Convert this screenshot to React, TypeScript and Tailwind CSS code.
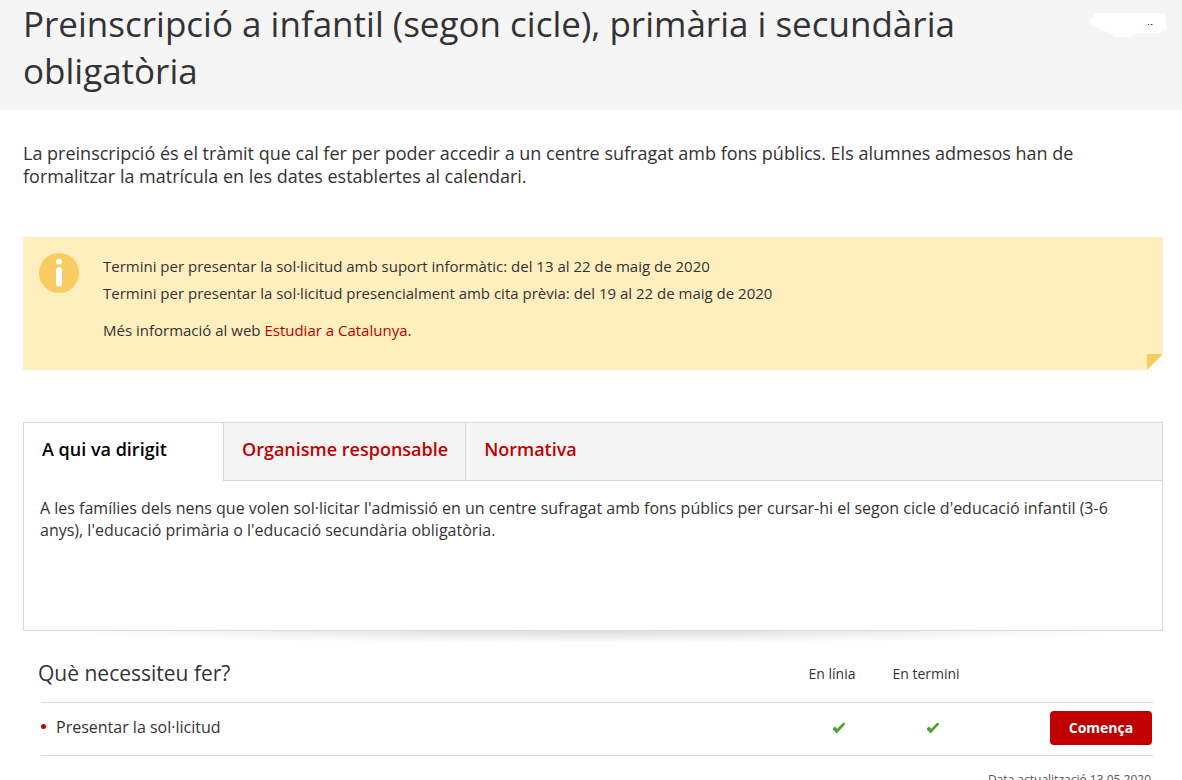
import { useState } from 'react';

interface Tab {
  id: string;
  label: string;
  content: string;
}

interface Step {
  name: string;
  online: boolean;
  open: boolean;
}

const tabs: Tab[] = [
  {
    id: 'dirigit',
    label: 'A qui va dirigit',
    content:
      "A les famílies dels nens que volen sol·licitar l'admissió en un centre sufragat amb fons públics per cursar-hi el segon cicle d'educació infantil (3-6 anys), l'educació primària o l'educació secundària obligatòria.",
  },
  { id: 'organisme', label: 'Organisme responsable', content: '' },
  { id: 'normativa', label: 'Normativa', content: '' },
];

const steps: Step[] = [{ name: 'Presentar la sol·licitud', online: true, open: true }];

function InfoIcon() {
  return (
    <svg className="h-10 w-10 shrink-0" viewBox="0 0 40 40" aria-hidden="true">
      <circle cx="20" cy="20" r="20" fill="#f9cb60" />
      <circle cx="20" cy="8.7" r="3" fill="#fff" />
      <rect x="17" y="14" width="6" height="19.5" rx="3" fill="#fff" />
    </svg>
  );
}

function CheckIcon({ label }: { label: string }) {
  return (
    <svg className="mx-auto h-3 w-3" viewBox="0 0 12 12" role="img" aria-label={label}>
      <path d="M0 6.2 L2 4.4 L4.2 6.8 L10.2 0.8 L12 1.2 L12 2.6 L4.2 11 L3.2 11 L0 7.8 Z" fill="#53a22c" />
    </svg>
  );
}

function Logo() {
  return (
    <svg className="mt-[13px] h-6 w-[76px] shrink-0" viewBox="0 0 76 24" aria-hidden="true">
      <path
        d="M3 0 H75 V9 H76 V18 H73 L71 20 H49 L44 21 L41 24 H23 V21 L17 19 L12 17 L10 15 L5 14 L3 13 H0 V5 H3 Z"
        fill="#fff"
      />
      <path d="M58 11 h1 v1 h-1 Z" fill="#c4007a" />
      <path d="M60 11 h1 v1 h-1 Z" fill="#f0c060" />
      <path d="M61 11 h1 v1 h-1 Z" fill="#c00000" />
      <path d="M62 11 h1 v1 h-1 Z" fill="#d8a0c8" />
    </svg>
  );
}

function Notice() {
  return (
    <div className="relative flex gap-6 bg-[#ffeebe] px-4 pt-4 pb-[26px] text-[15px]">
      <InfoIcon />
      <div className="leading-[27px]">
        <p>Termini per presentar la sol·licitud amb suport informàtic: del 13 al 22 de maig de 2020</p>
        <p>Termini per presentar la sol·licitud presencialment amb cita prèvia: del 19 al 22 de maig de 2020</p>
        <p className="mt-[10px]">
          Més informació al web{' '}
          <a href="#estudiar" className="text-[#c00000] hover:underline">
            Estudiar a Catalunya
          </a>
          .
        </p>
      </div>
      {/* Folded corner */}
      <svg className="absolute right-0 bottom-0 h-4 w-4" viewBox="0 0 16 16" aria-hidden="true">
        <path d="M0 16 L16 0 V16 Z" fill="#fff" />
        <path d="M0 0 H16 L0 16 Z" fill="#f9cb60" />
      </svg>
    </div>
  );
}

function Tabs() {
  const [active, setActive] = useState(tabs[0].id);
  const current = tabs.find((t) => t.id === active) ?? tabs[0];

  return (
    <div>
      <div className="border border-[#d9d9d9]">
        <div className="flex" role="tablist">
          {tabs.map((tab, i) => (
            <button
              key={tab.id}
              type="button"
              role="tab"
              id={`tab-${tab.id}`}
              aria-selected={tab.id === active}
              aria-controls="tab-panel"
              onClick={() => setActive(tab.id)}
              className={`h-[58px] border-b pr-[17px] pb-[6px] pl-[18px] text-left text-lg font-semibold ${
                i === 0 ? 'w-[199px]' : 'border-l border-l-[#d9d9d9]'
              } ${
                tab.id === active
                  ? 'border-b-white bg-white text-black'
                  : 'border-b-[#d9d9d9] bg-[#f5f5f5] text-[#c00000]'
              }`}
            >
              {tab.label}
            </button>
          ))}
          <div className="flex-1 border-b border-[#d9d9d9] bg-[#f5f5f5]" />
        </div>
        <div
          id="tab-panel"
          role="tabpanel"
          aria-labelledby={`tab-${current.id}`}
          className="min-h-[149px] px-4 pt-4 text-base leading-[22px]"
        >
          <p>{current.content}</p>
        </div>
      </div>
      <div className="mx-10 h-3 bg-[radial-gradient(ellipse_50%_100%_at_50%_0,#dcdcdc,#ffffff)]" />
    </div>
  );
}

function StepsTable() {
  return (
    <table className="w-full table-fixed">
      <thead>
        <tr className="h-[56px] border-b border-[#d9d9d9]">
          <th scope="col" className="text-left text-[21px] font-normal">
            <div className="-ml-[3px]">Què necessiteu fer?</div>
          </th>
          <th scope="col" className="w-[94px] pr-[14px] text-sm font-normal">
            En línia
          </th>
          <th scope="col" className="w-[94px] pr-[14px] text-sm font-normal">
            En termini
          </th>
          <td className="w-[173px]" />
        </tr>
      </thead>
      <tbody>
        {steps.map((step) => (
          <tr key={step.name} className="h-[53px] border-b border-[#d9d9d9]">
            <td className="pb-1 text-base">
              <div className="flex items-center gap-[10px]">
                <span className="h-[5px] w-[5px] rounded-full bg-[#c00000]" />
                {step.name}
              </div>
            </td>
            <td className="pb-0.5">{step.online && <CheckIcon label="Sí" />}</td>
            <td className="pb-0.5">{step.open && <CheckIcon label="Sí" />}</td>
            <td className="pr-px pb-0.5 text-right">
              <button
                type="button"
                className="h-[34px] w-[102px] rounded bg-[#c00000] text-sm font-bold text-white hover:bg-[#a00000]"
              >
                Comença
              </button>
            </td>
          </tr>
        ))}
      </tbody>
    </table>
  );
}

export default function App() {
  return (
    <div className="bg-white font-['Open_Sans',sans-serif] text-[#333333]">
      <header className="flex items-start justify-between bg-[#f5f5f5] pr-4 pb-4 pl-[23px]">
        <h1 className="max-w-[1000px] text-[35px] leading-[47px]">
          Preinscripció a infantil (segon cicle), primària i secundària obligatòria
        </h1>
        <Logo />
      </header>

      <main className="pr-[19px] pl-[23px]">
        <p className="mt-8 mb-[49px] pr-10 text-lg leading-[23px]">
          La preinscripció és el tràmit que cal fer per poder accedir a un centre sufragat amb fons públics. Els
          alumnes admesos han de formalitzar la matrícula en les dates establertes al calendari.
        </p>

        <Notice />

        <div className="mt-[52px]">
          <Tabs />
        </div>

        <div className="mt-[3px] pr-[10px] pl-[18px]">
          <StepsTable />
          <p className="mt-4 pr-0.5 text-right text-xs text-[#555555]">Data actualització 13.05.2020</p>
        </div>
      </main>
    </div>
  );
}
